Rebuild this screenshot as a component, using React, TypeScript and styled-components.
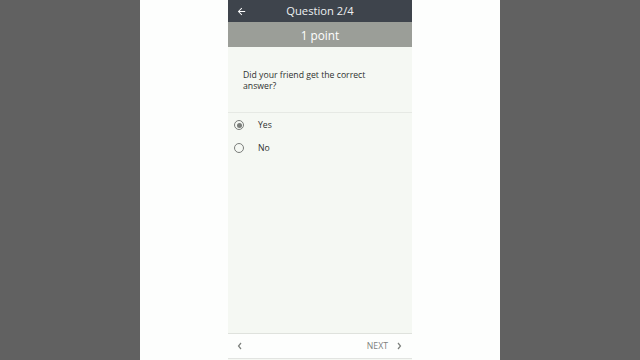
import { FC, useState } from 'react';
import styled, { createGlobalStyle } from 'styled-components';

const GlobalStyle = createGlobalStyle`
  html, body {
    margin: 0;
    padding: 0;
    background: #616161;
  }
  body {
    font-family: 'Open Sans', 'DejaVu Sans', sans-serif;
  }
`;

const Page = styled.div`
  display: flex;
  justify-content: center;
  width: 640px;
  height: 360px;
  background: #616161;
`;

const Sheet = styled.div`
  width: 360px;
  height: 360px;
  background: #fdfefd;
  display: flex;
  justify-content: center;
`;

const Phone = styled.div`
  width: 184px;
  height: 360px;
  display: flex;
  flex-direction: column;
  background: #f5f8f3;
`;

const Header = styled.div`
  height: 22px;
  background: #3e444c;
  display: grid;
  grid-template-columns: 26px 1fr 26px;
  align-items: center;
  color: #ffffff;
`;

const BackButton = styled.div`
  display: flex;
  justify-content: center;
  align-items: center;
`;

const Title = styled.div`
  text-align: center;
  font-size: 11.2px;
  line-height: 22px;
  color: #eef0f2;
`;

const PointBar = styled.div`
  height: 25px;
  background: #9b9e98;
  color: #ffffff;
  font-size: 11.8px;
  line-height: 27px;
  text-align: center;
`;

const Question = styled.div`
  padding: 23px 15px 20px 15px;
  font-size: 8.7px;
  line-height: 11px;
  color: #2f3230;
  border-bottom: 1px solid #e6e9e4;
`;

const Options = styled.div`
  flex: 1;
  display: flex;
  flex-direction: column;
  padding-top: 1px;
`;

const Option = styled.label`
  display: flex;
  align-items: center;
  height: 22.5px;
  padding-left: 6px;
  gap: 14px;
  font-size: 8.7px;
  color: #2f3230;
  cursor: pointer;
`;

const Radio = styled.span<{ $checked: boolean }>`
  width: 10px;
  height: 10px;
  box-sizing: border-box;
  border-radius: 50%;
  border: 1px solid #7a7d7a;
  display: flex;
  align-items: center;
  justify-content: center;
  &::after {
    content: '';
    width: 5px;
    height: 5px;
    border-radius: 50%;
    background: ${p => (p.$checked ? '#7a7d7a' : 'transparent')};
  }
`;

const Footer = styled.div`
  height: 24px;
  background: #fdfefd;
  border-top: 1px solid #dfe2dd;
  border-bottom: 1px solid #e2e4e1;
  display: flex;
  align-items: center;
  justify-content: space-between;
  padding: 0 10px 0 9px;
  margin-bottom: 1px;
`;

const NextButton = styled.div`
  display: flex;
  align-items: center;
  gap: 8px;
  font-size: 8.7px;
  color: #7d807d;
`;

const Chevron: FC<{ dir: 'left' | 'right' }> = ({ dir }) => (
  <svg width="6" height="8" viewBox="0 0 6 8">
    <path
      d={dir === 'left' ? 'M4 1 L1.5 4 L4 7' : 'M2 1 L4.5 4 L2 7'}
      fill="none"
      stroke="#7d807d"
      strokeWidth="1.2"
    />
  </svg>
);

const ArrowBack: FC = () => (
  <svg width="11" height="11" viewBox="0 0 24 24">
    <path d="M20 11H7.83l5.59-5.59L12 4l-8 8 8 8 1.41-1.41L7.83 13H20v-2z" fill="#ffffff" />
  </svg>
);

const answers = ['Yes', 'No'];

export default function App() {
  const [selected, setSelected] = useState('Yes');
  return (
    <>
      <GlobalStyle />
      <Page>
        <Sheet>
          <Phone>
            <Header>
              <BackButton>
                <ArrowBack />
              </BackButton>
              <Title>Question 2/4</Title>
              <span />
            </Header>
            <PointBar>1 point</PointBar>
            <Question>
              Did your friend get the correct
              <br />
              answer?
            </Question>
            <Options>
              {answers.map(a => (
                <Option key={a} onClick={() => setSelected(a)}>
                  <Radio $checked={selected === a} />
                  {a}
                </Option>
              ))}
            </Options>
            <Footer>
              <Chevron dir="left" />
              <NextButton>
                NEXT
                <Chevron dir="right" />
              </NextButton>
            </Footer>
          </Phone>
        </Sheet>
      </Page>
    </>
  );
}
